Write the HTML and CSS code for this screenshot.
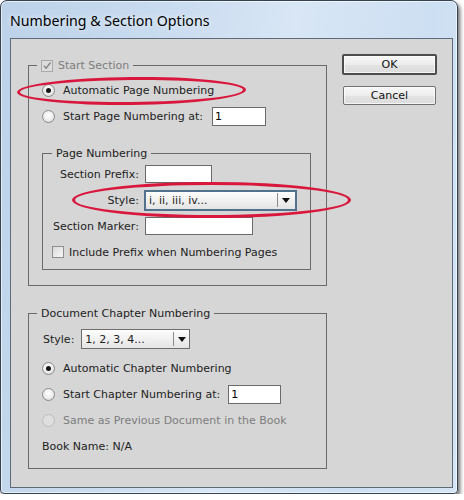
FILE: index.html
```html
<!DOCTYPE html>
<html>
<head>
<meta charset="utf-8">
<title>Numbering &amp; Section Options</title>
<link rel="stylesheet" href="styles.css">
</head>
<body>
<div class="window">
  <div class="titlebar">Numbering &amp; Section Options</div>
  <div class="client">
    <div class="main">
      <fieldset class="group section">
        <legend class="legend">
          <span class="check disabled"><svg width="12" height="12" viewBox="0 0 12 12"><path d="M2.3 5.8 L4.9 8.6 L10.2 1.8" fill="none" stroke="#858585" stroke-width="1.7"/></svg></span>
          <span class="muted">Start Section</span>
        </legend>
        <div class="section-body">
          <div class="row"><span class="radio on"></span>Automatic Page Numbering</div>
          <div class="row"><span class="radio"></span>Start Page Numbering at:<span class="field start-page">1</span></div>
          <fieldset class="group page">
            <legend class="legend legend-page">Page Numbering</legend>
            <div class="form">
              <span class="lbl">Section Prefix:</span><span class="field prefix"></span>
              <span class="lbl">Style:</span>
              <span class="select focus page-style"><span class="val">i, ii, iii, iv...</span><span class="sep"></span><span class="arr"><svg width="8" height="5" viewBox="0 0 8 5"><path d="M0 0 H8 L4 5 Z" fill="#111"/></svg></span></span>
              <span class="lbl">Section Marker:</span><span class="field marker"></span>
              <div class="row wide"><span class="check"></span>Include Prefix when Numbering Pages</div>
            </div>
          </fieldset>
        </div>
      </fieldset>

      <fieldset class="group chapter">
        <legend class="legend">Document Chapter Numbering</legend>
        <div class="chapter-body">
          <div class="row style-row"><span class="style-lbl">Style:</span>
            <span class="select chapter-style"><span class="val">1, 2, 3, 4...</span><span class="sep"></span><span class="arr"><svg width="8" height="5" viewBox="0 0 8 5"><path d="M0 0 H8 L4 5 Z" fill="#111"/></svg></span></span>
          </div>
          <div class="radios">
            <div class="row"><span class="radio on"></span>Automatic Chapter Numbering</div>
            <div class="row"><span class="radio"></span>Start Chapter Numbering at:<span class="field start-chapter">1</span></div>
            <div class="row muted"><span class="radio disabled"></span>Same as Previous Document in the Book</div>
            <div class="row">Book Name: N/A</div>
          </div>
        </div>
      </fieldset>
    </div>
    <div class="buttons">
      <div class="btn default">OK</div>
      <div class="btn cancel">Cancel</div>
    </div>
  </div>
  <div class="mark mark-auto"></div>
  <div class="mark mark-style"></div>
</div>
</body>
</html>
```

FILE: styles.css
```css
* { box-sizing: border-box; }

body {
  margin: 0;
  background: #ffffff;
  font-family: "DejaVu Sans", Verdana, sans-serif;
  font-size: 11px;
  color: #222222;
}

.window {
  position: relative;
  width: 458px;
  height: 494px;
  border: 1px solid #35424f;
  border-radius: 7px 7px 4px 4px;
  padding: 0 4px 5px 9px;
  background: linear-gradient(100deg, #bcd2e9 0%, #c9dbef 30%, #d8e6f5 55%, #cddff2 80%, #d5e5f5 100%);
  box-shadow: 2px 3px 4px rgba(0, 0, 0, 0.6), inset 0 0 0 1px rgba(255, 255, 255, 0.6);
  display: flex;
  flex-direction: column;
}

.titlebar {
  flex: none;
  height: 37px;
  padding-top: 10px;
  font-family: "Noto Sans", "Open Sans", sans-serif;
  font-size: 14.2px;
  line-height: 20px;
  color: #000;
  text-shadow: 0 0 6px rgba(255, 255, 255, 0.9);
}

.client {
  flex: none;
  width: 443px;
  height: 450px;
  border: 1px solid #5d6b7a;
  background: #d6d6d6;
  display: flex;
  align-items: flex-start;
}

.main {
  padding: 19px 0 0 17px;
}

.group {
  margin: 0;
  padding: 0;
  min-width: 0;
  border: 1px solid #6a6a6a;
}

.legend {
  display: flex;
  align-items: center;
  gap: 5px;
  height: 15px;
  padding: 0 4px;
  margin-left: 8px;
  line-height: 15px;
}

.legend-page {
  margin-left: 9px;
}

.muted {
  color: #7d7d7d;
}

.section {
  width: 299px;
}

.section-body {
  padding: 4px 15px 15px 13px;
}

.row {
  display: flex;
  align-items: center;
  height: 26px;
  white-space: nowrap;
}

.radio {
  flex: none;
  width: 13px;
  height: 13px;
  margin-right: 8px;
  border-radius: 50%;
  border: 1px solid #8a8a8a;
  background: radial-gradient(circle at 50% 40%, #ffffff 0, #ececec 55%, #d2d2d2 100%);
  display: flex;
  align-items: center;
  justify-content: center;
}

.radio.on::after {
  content: "";
  width: 5px;
  height: 5px;
  border-radius: 50%;
  background: #161616;
}

.radio.disabled {
  border-color: #bcbcbc;
  background: #dedede;
}

.check {
  flex: none;
  width: 12px;
  height: 12px;
  border: 1px solid #8e8e8e;
  background: linear-gradient(135deg, #d9d9d9, #f8f8f8);
  display: flex;
  align-items: center;
  justify-content: center;
}

.check svg {
  display: block;
}

.check.disabled {
  border-color: #a9a9a9;
  background: #dcdcdc;
}

.field {
  display: flex;
  align-items: center;
  height: 19px;
  padding-left: 2px;
  background: #ffffff;
  border: 1px solid #6b6b6b;
  color: #000;
}

.start-page {
  width: 54px;
  margin-left: 9px;
}

.page {
  width: 269px;
  margin-top: 17px;
}

.form {
  display: grid;
  grid-template-columns: auto auto;
  justify-content: start;
  grid-auto-rows: 26px;
  column-gap: 6px;
  align-items: center;
  padding: 0 4px 4px 10px;
}

.lbl {
  justify-self: end;
  white-space: nowrap;
}

.prefix {
  width: 67px;
  height: 18px;
}

.marker {
  width: 108px;
  height: 18px;
}

.wide {
  grid-column: 1 / -1;
  margin-left: -1px;
}

.wide .check {
  margin-right: 5px;
}

.select {
  display: flex;
  align-items: center;
  height: 20px;
  border: 1px solid #6e6e6e;
  background: linear-gradient(#fdfdfd, #e4e4e4);
  color: #222222;
}

.select .val {
  flex: 1;
  padding-left: 3px;
  white-space: nowrap;
}

.select .sep {
  width: 1px;
  height: 14px;
  background: #8c8c8c;
}

.select .arr {
  display: flex;
  justify-content: center;
  align-items: center;
}

.select .arr svg {
  display: block;
}

.page-style {
  width: 153px;
  height: 21px;
  margin-left: -1px;
  border: 2px solid #52718c;
}

.page-style .arr {
  width: 17px;
}

.chapter {
  width: 299px;
  margin-top: 20px;
}

.chapter-body {
  padding: 5px 0 9px 13px;
}

.style-lbl {
  margin-left: 1px;
  margin-right: 7px;
}

.chapter-style {
  width: 109px;
  height: 20px;
}

.chapter-style .arr {
  width: 15px;
}

.radios {
  margin-top: 3px;
}

.start-chapter {
  width: 53px;
  margin-left: 8px;
}

.buttons {
  display: flex;
  flex-direction: column;
  align-items: center;
  width: 95px;
  margin-left: 15px;
  padding-top: 15px;
  gap: 11px;
}

.btn {
  display: flex;
  align-items: center;
  justify-content: center;
  border: 1px solid #707070;
  border-radius: 2px;
  background: linear-gradient(#f7f7f7 0%, #ededed 50%, #e3e3e3 51%, #dcdcdc 100%);
  box-shadow: inset 0 0 0 1px rgba(255, 255, 255, 0.7);
  color: #111;
}

.default {
  width: 95px;
  height: 21px;
  border: 2px solid #4d4d4d;
}

.cancel {
  width: 93px;
  height: 19px;
}

.mark {
  position: absolute;
  border: 3px solid #d9173d;
  border-radius: 50%;
}

.mark-auto {
  left: 16px;
  top: 76px;
  width: 229px;
  height: 28px;
  transform: rotate(-0.6deg);
}

.mark-style {
  left: 71px;
  top: 181px;
  width: 279px;
  height: 36px;
}
```
